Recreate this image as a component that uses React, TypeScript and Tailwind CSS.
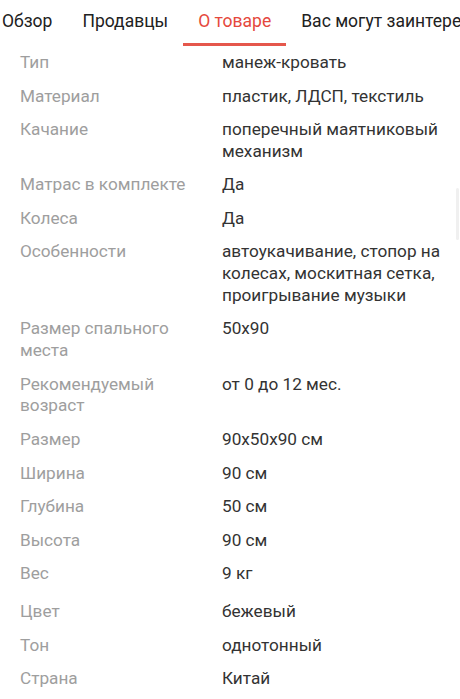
import React from 'react';

const tabs = ['Обзор', 'Продавцы', 'О товаре', 'Вас могут заинтересовать'];

const specs: { label: string; value: string; gap?: boolean }[] = [
  { label: 'Тип', value: 'манеж-кровать' },
  { label: 'Материал', value: 'пластик, ЛДСП, текстиль' },
  { label: 'Качание', value: 'поперечный маятниковый механизм' },
  { label: 'Матрас в комплекте', value: 'Да' },
  { label: 'Колеса', value: 'Да' },
  { label: 'Особенности', value: 'автоукачивание, стопор на колесах, москитная сетка, проигрывание музыки' },
  { label: 'Размер спального места', value: '50x90' },
  { label: 'Рекомендуемый возраст', value: 'от 0 до 12 мес.' },
  { label: 'Размер', value: '90x50x90 см' },
  { label: 'Ширина', value: '90 см' },
  { label: 'Глубина', value: '50 см' },
  { label: 'Высота', value: '90 см' },
  { label: 'Вес', value: '9 кг' },
  { label: 'Цвет', value: 'бежевый', gap: true },
  { label: 'Тон', value: 'однотонный' },
  { label: 'Страна', value: 'Китай' },
];

export default function App() {
  return (
    <div className="relative w-[460px] h-[699px] overflow-hidden bg-white font-['Roboto',sans-serif]">
      {/* tab strip, scrolled a little to the right */}
      <div className="h-[46px] overflow-hidden">
        <div className="flex ml-[-13px] whitespace-nowrap">
          {tabs.map((t) => {
            const active = t === 'О товаре';
            return (
              <div
                key={t}
                className={
                  active
                    ? 'h-[46px] px-[15px] pt-[10px] text-[17.5px] leading-[22px] text-[#e5483d] border-b-[3px] border-[#e5574c]'
                    : 'h-[46px] px-[15px] pt-[10px] text-[17.5px] leading-[22px] text-[#212121]'
                }
              >
                {t}
              </div>
            );
          })}
        </div>
      </div>

      <div className="flex flex-col">
        {specs.map((s, i) => (
          <div
            key={s.label}
            className={
              s.gap
                ? 'flex gap-[12px] pl-[20px] pr-[14px] pt-[10.4px] pb-[5.9px] text-[17.2px] leading-[21.75px]'
                : i === 0
                  ? 'flex gap-[12px] pl-[20px] pr-[14px] pt-[6px] pb-[5.9px] text-[17.2px] leading-[21.75px]'
                  : 'flex gap-[12px] pl-[20px] pr-[14px] py-[5.9px] text-[17.2px] leading-[21.75px]'
            }
          >
            <div className="w-[190px] shrink-0 text-[#9e9e9e]">{s.label}</div>
            <div className="w-[224px] text-[#333333]">{s.value}</div>
          </div>
        ))}
      </div>

      {/* faint scrollbar thumb */}
      <div className="absolute right-[1px] top-[188px] w-[3px] h-[52px] rounded-full bg-[#f0f0f0]" />
    </div>
  );
}
